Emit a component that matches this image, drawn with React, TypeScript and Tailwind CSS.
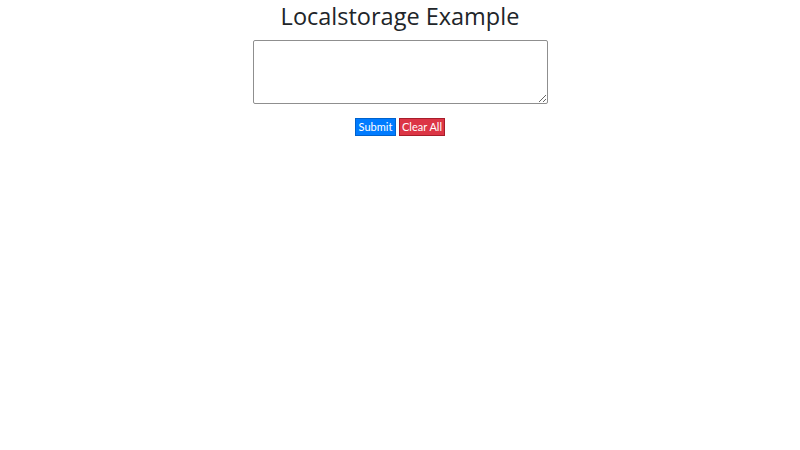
import React, { useState } from 'react';

export default function App() {
  const [text, setText] = useState('');

  return (
    <div className="min-h-[450px] w-full bg-white font-['Open_Sans',sans-serif] text-[#212529]">
      <div className="flex flex-col items-center">
        <h1 className="h-[34px] text-[23.5px] leading-[32px] font-normal">
          Localstorage Example
        </h1>
        <textarea
          value={text}
          onChange={(event) => setText(event.target.value)}
          className="mt-[6px] h-[64px] w-[295px] rounded-[2px] border border-[#8f8f8f] bg-white"
        />
        <div className="mt-[14px] flex gap-[3px] font-['Lato',sans-serif]">
          <button
            type="button"
            className="h-[18px] w-[41px] border border-[#0062cc] bg-[#007bff] text-[11px] leading-[16px] text-white"
          >
            Submit
          </button>
          <button
            type="button"
            className="h-[18px] w-[46px] border border-[#a71d2a] bg-[#dc3545] text-[11px] leading-[16px] text-white"
            onClick={() => setText('')}
          >
            Clear All
          </button>
        </div>
      </div>
    </div>
  );
}
